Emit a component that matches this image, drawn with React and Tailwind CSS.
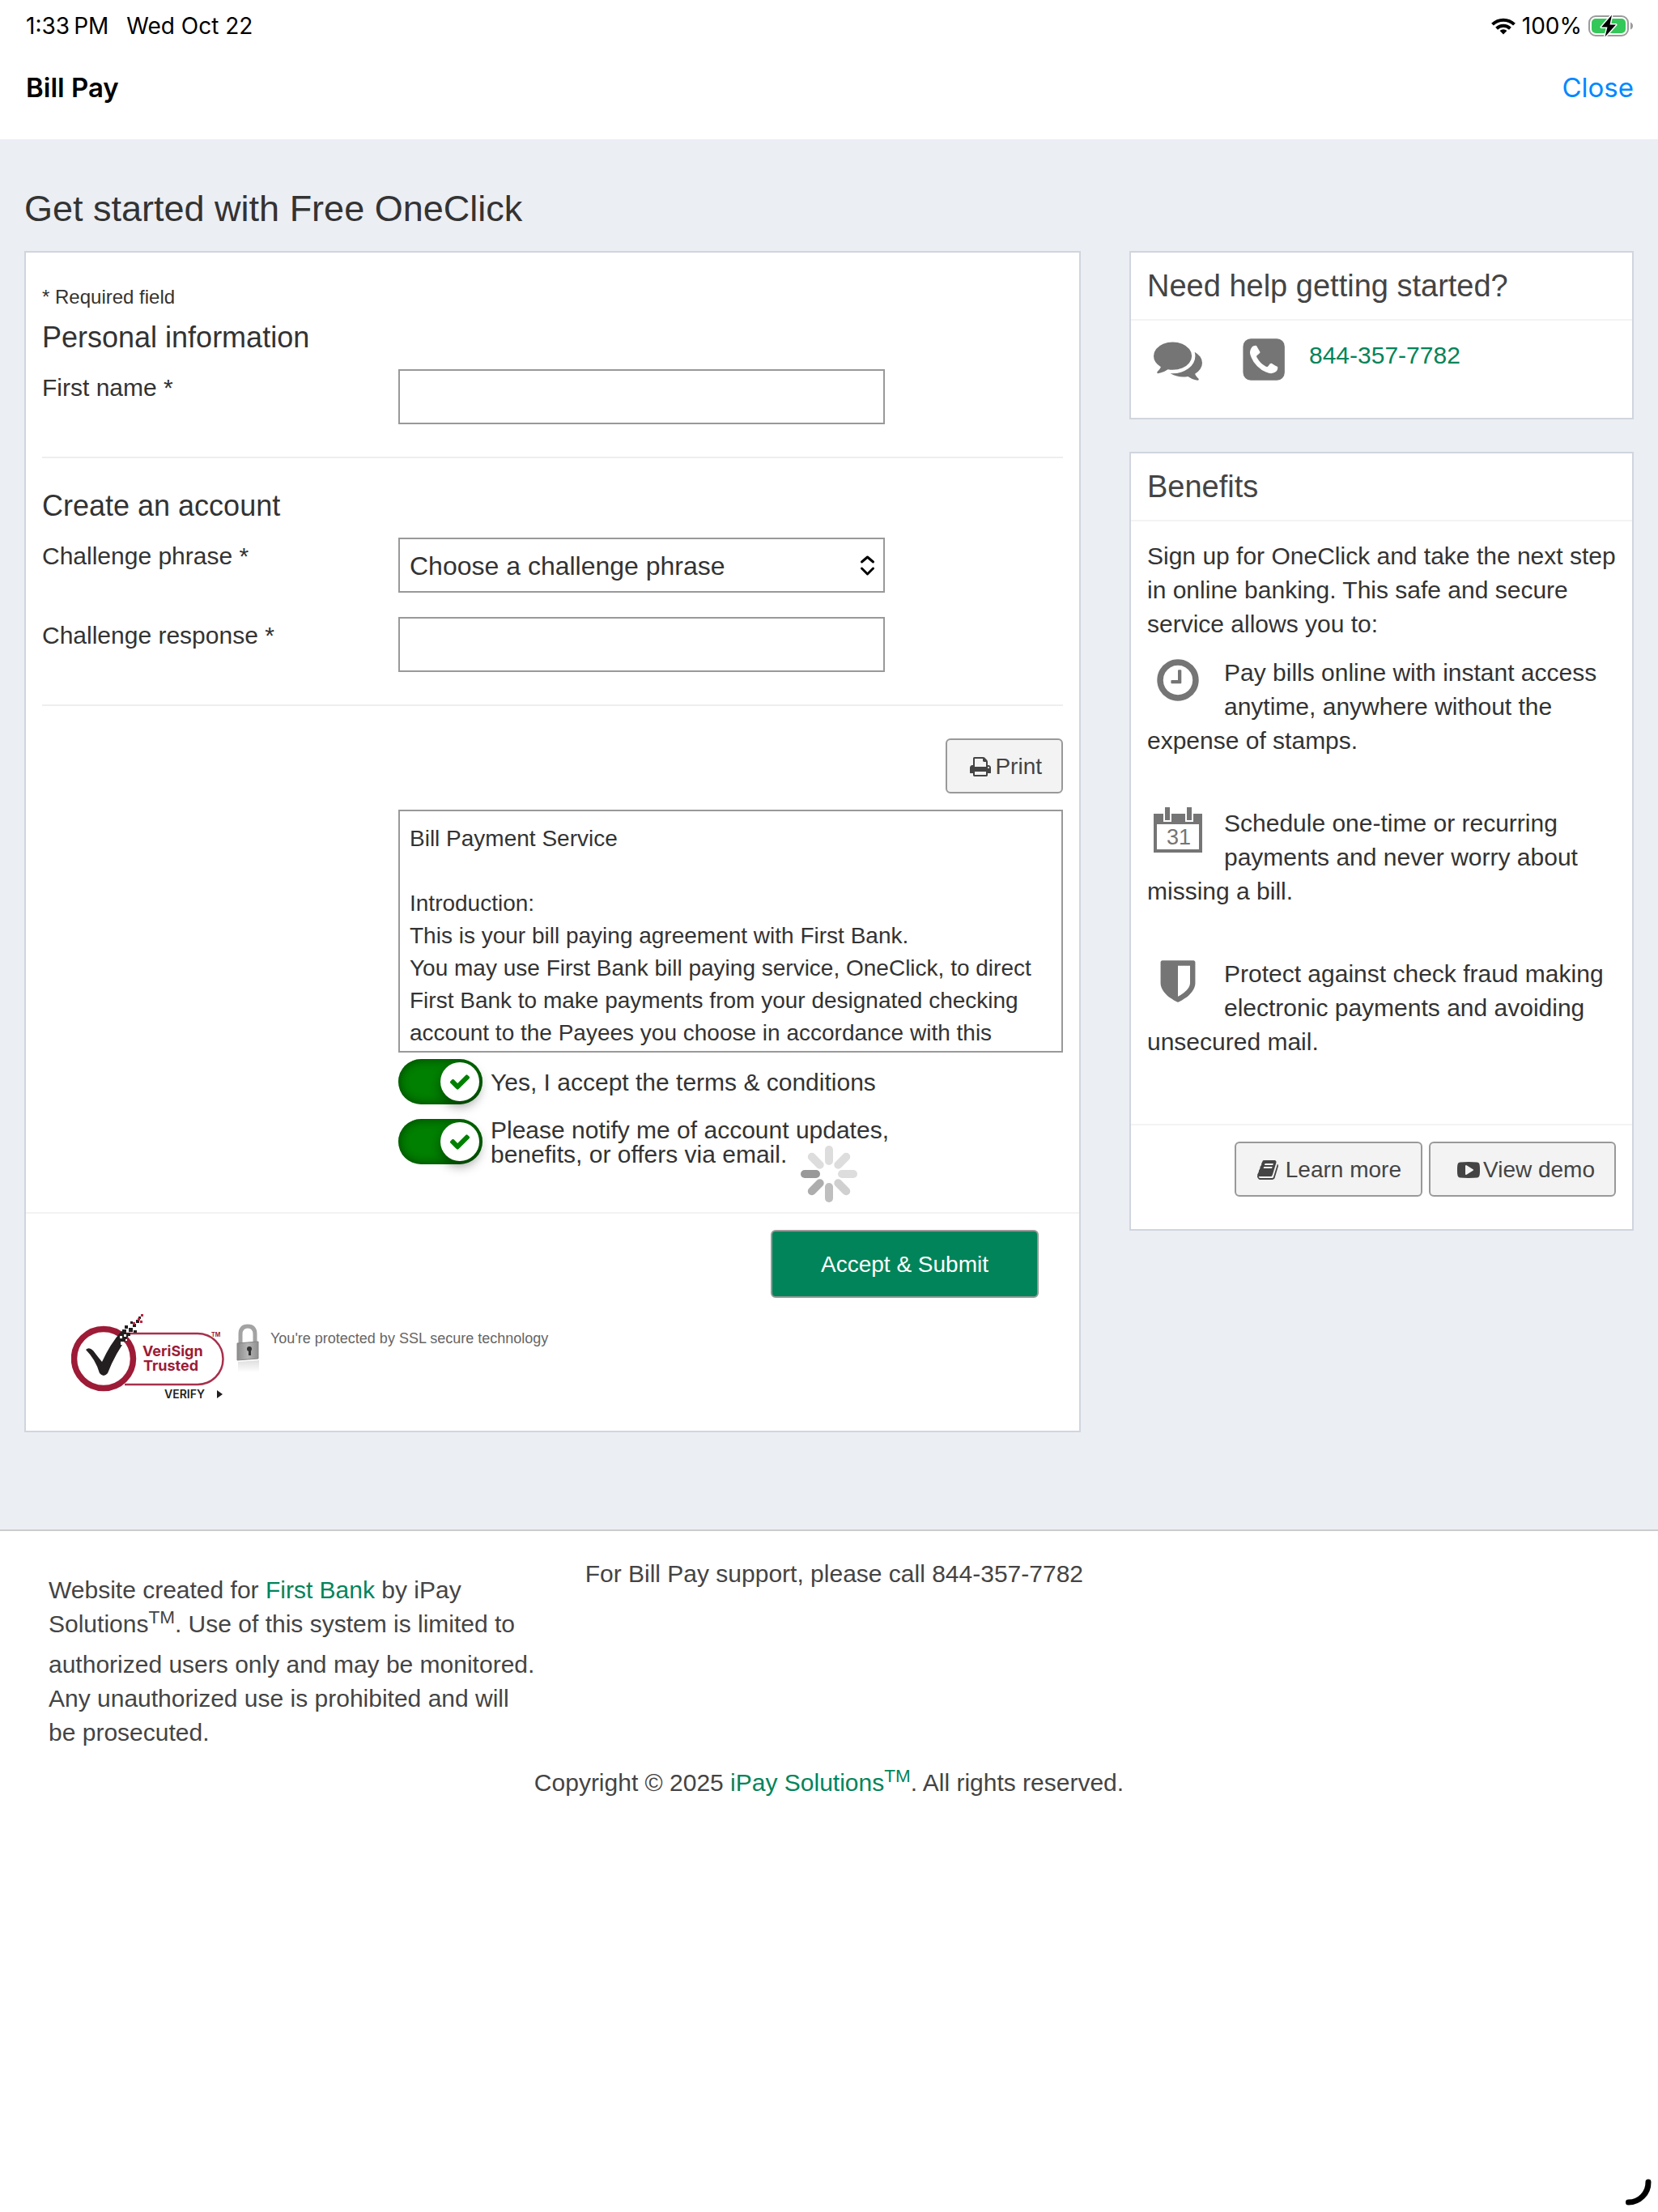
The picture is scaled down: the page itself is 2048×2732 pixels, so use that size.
import { useState } from "react";

const SANS = "font-['Liberation_Sans',Arial,sans-serif]";

const AGREEMENT = `Bill Payment Service

Introduction:
This is your bill paying agreement with First Bank.
You may use First Bank bill paying service, OneClick, to direct First Bank to make payments from your designated checking account to the Payees you choose in accordance with this`;

const ICONS = {
  comments:
    "M1408 768q0 139-94 257t-256.5 186.5-353.5 68.5q-86 0-176-16-124 88-278 128-36 9-86 16h-3q-11 0-20.5-8t-11.5-21q-1-3-1-6.5t.5-6.5 2-6l2.5-5t3.5-5.5 4-5 4.5-5 4-4.5q5-6 23-25t26-29.5 22.5-29 25-38.5 20.5-44q-124-72-195-177t-71-224q0-139 94-257t256.5-186.5 353.5-68.5 353.5 68.5 256.5 186.5 94 257zm384 256q0 120-71 224.5t-195 176.5q10 24 20.5 44t25 38.5 22.5 29 26 29.5 23 25q1 1 4 4.5t4.5 5 4 5 3.5 5.5l2.5 5t2 6 .5 6.5-1 6.5q-3 14-13 22t-22 7q-50-7-86-16-154-40-278-128-90 16-176 16-271 0-472-132 58 4 88 4 161 0 309-45t264-129q125-92 192-212t67-254q0-77-23-152 129 71 204 178t75 230z",
  phone:
    "M1472 1193q0-11-2-16t-18-16.5-40.5-25-47.5-26.5-45.5-25-28.5-15q-5-3-19-13t-25-15-21-5q-15 0-36.5 20.5t-39.5 45-38.5 45-33.5 20.5q-7 0-16.5-3.5t-15.5-6.5-17-9.5-14-8.5q-99-55-170-126.5t-127-170.5q-2-3-8.5-14t-9.5-17-6.5-15.5-3.5-16.5q0-13 20.5-33.5t45-38.5 45-39.5 20.5-36.5q0-10-5-21t-15-25-13-19q-3-6-15-28.5t-25-45.5-26.5-47.5-25-40.5-16.5-18-16-2q-48 0-101 22-46 21-80 94.5t-34 130.5q0 16 2.5 34t5 30.5 9 33 10 29.5 12.5 33 11 30q60 164 216.5 320.5t320.5 216.5q6 2 30 11t33 12.5 29.5 10 33 9 30.5 5 34 2.5q57 0 130.5-34t94.5-80q22-53 22-101zm256-777v960q0 119-84.5 203.5t-203.5 84.5h-960q-119 0-203.5-84.5t-84.5-203.5v-960q0-119 84.5-203.5t203.5-84.5h960q119 0 203.5 84.5t84.5 203.5z",
  clock:
    "M1024 544v448q0 14-9 23t-23 9h-320q-14 0-23-9t-9-23v-64q0-14 9-23t23-9h224v-352q0-14 9-23t23-9h64q14 0 23 9t9 23zm416 352q0-148-73-273t-198-198-273-73-273 73-198 198-73 273 73 273 198 198 273 73 273-73 198-198 73-273zm224 0q0 209-103 385.5t-279.5 279.5-385.5 103-385.5-103-279.5-279.5-103-385.5 103-385.5 279.5-279.5 385.5-103 385.5 103 279.5 279.5 103 385.5z",
  shield:
    "M1344 960v-640h-448v1137q119-63 213-137 235-184 235-360zm192-768v768q0 86-33.5 170.5t-83 150-118 127.5-126.5 103-121 77.5-89.5 49.5-42.5 20q-12 6-26 6t-26-6q-16-7-42.5-20t-89.5-49.5-121-77.5-126.5-103-118-127.5-83-150-33.5-170.5v-768q0-26 19-45t45-19h1152q26 0 45 19t19 45z",
  print:
    "M448 1536h896v-256h-896v256zm0-640h896v-384h-160q-40 0-68-28t-28-68v-160h-640v640zm1152 64q0-26-19-45t-45-19-45 19-19 45 19 45 45 19 45-19 19-45zm128 0v416q0 13-9.5 22.5t-22.5 9.5h-224v160q0 40-28 68t-68 28h-960q-40 0-68-28t-28-68v-160h-224q-13 0-22.5-9.5t-9.5-22.5v-416q0-79 56.5-135.5t135.5-56.5h64v-544q0-40 28-68t68-28h672q40 0 88 20t76 48l152 152q28 28 48 76t20 88v256h64q79 0 135.5 56.5t56.5 135.5z",
  book: "M1703 478q40 57 18 129l-275 906q-19 64-76.5 107.5t-122.5 43.5h-923q-77 0-148.5-53.5t-99.5-131.5q-24-67-2-127 0-4 3-27t4-37q1-8-3-21.5t-3-19.5q2-11 8-21t16.5-23.5 16.5-23.5q23-38 45-91.5t30-91.5q3-10 .5-30t-.5-28q3-11 17-28t17-23q21-36 42-92t25-90q1-9-2.5-32t.5-28q4-13 22-30.5t22-22.5q19-26 42.5-84.5t27.5-96.5q1-8-3-25.5t-2-26.5q2-8 9-18t18-23 17-21q8-12 16.5-30.5t15-35 16-36 19.5-32 26.5-23.5 36-11.5 47.5 5.5l-1 3q38-9 51-9h761q74 0 114 56t18 130l-274 906q-36 119-71.5 153.5t-128.5 34.5h-869q-27 0-38 15-11 16-1 43 24 70 144 70h923q29 0 56-15.5t35-41.5l300-987q7-22 5-57 38 15 59 43zm-1064 2q-4 13 2 22.5t20 9.5h608q13 0 25.5-9.5t16.5-22.5l21-64q4-13-2-22.5t-20-9.5h-608q-13 0-25.5 9.5t-16.5 22.5zm-83 256q-4 13 2 22.5t20 9.5h608q13 0 25.5-9.5t16.5-22.5l21-64q4-13-2-22.5t-20-9.5h-608q-13 0-25.5 9.5t-16.5 22.5z",
  play: "M1280 896q0-37-30-54l-512-320q-31-20-65-2-33 18-33 56v640q0 38 33 56 16 8 31 8 20 0 34-10l512-320q30-17 30-54zm512 0q0 96-1 150t-8.5 136.5-22.5 147.5q-16 73-69 123t-124 58q-222 25-671 25t-671-25q-71-8-124.5-58t-69.5-123q-14-65-21.5-147.5t-8.5-136.5-1-150 1-150 8.5-136.5 22.5-147.5q16-73 69-123t124-58q222-25 671-25t671 25q71 8 124.5 58t69.5 123q14 65 21.5 147.5t8.5 136.5 1 150z",
  check:
    "M1671 566q0 40-28 68l-724 724-136 136q-28 28-68 28t-68-28l-136-136-362-362q-28-28-28-68t28-68l136-136q28-28 68-28t68 28l294 295 656-657q28-28 68-28t68 28l136 136q28 28 28 68z",
};

const Icon = ({ name, className }) => (
  <svg viewBox="0 0 1792 1792" fill="currentColor" className={className} aria-hidden="true">
    <path d={ICONS[name]} />
  </svg>
);

const CalendarIcon = () => (
  <svg viewBox="0 0 60 60" className="size-[60px]" fill="#757575" aria-hidden="true">
    <path fillRule="evenodd" d="M0 9H12V19H22V9H39V19H49V9H60V57H0ZM4 22V53H56V22Z" />
    <path d="M14 1H20V17H14ZM41 1H47V17H41Z" />
    <text x="31" y="47" textAnchor="middle" fontSize="27" fontFamily="Liberation Sans">
      31
    </text>
  </svg>
);

const WifiIcon = () => (
  <svg viewBox="0 0 30 21" className="h-[21px] w-[30px]" aria-hidden="true">
    <g fill="none" stroke="#000" strokeWidth="4">
      <path d="M1.5 8.2A19.2 19.2 0 0 1 28.5 8.2" />
      <path d="M6.6 13.3A12 12 0 0 1 23.4 13.3" />
    </g>
    <path d="M15 20.5L10.6 16.1A6.3 6.3 0 0 1 19.4 16.1Z" />
  </svg>
);

const BatteryIcon = () => (
  <svg viewBox="0 0 56 28" className="h-7 w-14" aria-hidden="true">
    <rect x="1" y="2" width="48" height="24" rx="8" fill="none" stroke="#9b9b9b" strokeWidth="2" />
    <rect x="4" y="5" width="42" height="18" rx="5" fill="#34c759" />
    <path d="M52 9.5Q55 11 55 14T52 18.5Z" fill="#9b9b9b" />
    <path
      d="M29 0.5L16 15.5H23.5L20.5 27.5L34 12.5H26.5Z"
      fill="#000"
      stroke="#fff"
      strokeWidth="3"
      paintOrder="stroke"
      strokeLinejoin="round"
    />
  </svg>
);

const SPOKES = ["#dddddd", "#dddddd", "#dddddd", "#d0d0d0", "#bfbfbf", "#adadad", "#999999", "#dddddd"];

const Spinner = () => (
  <svg viewBox="0 0 72 72" className="size-[72px]" role="status" aria-label="Loading">
    {SPOKES.map((color, i) => (
      <rect
        key={i}
        x="31"
        y="1"
        width="10"
        height="24"
        rx="5"
        fill={color}
        transform={`rotate(${i * 45} 36 36)`}
      />
    ))}
  </svg>
);

const VeriSignLogo = () => (
  <svg viewBox="0 0 192 110" className="h-[110px] w-48" role="img" aria-label="VeriSign Trusted">
    <path d="M66 24H156A31.500 31.500 0 0 1 156 87H66" fill="none" stroke="#a8304c" strokeWidth="2.500" />
    <circle cx="40" cy="55" r="36.500" fill="#fff" stroke="#9d1b36" strokeWidth="7.500" />
    <path
      d="M18 44Q22 40 27 45Q33 53 38 59Q48 37 62 21L72 25Q54 49 45 73Q40 79 35 73Q30 56 18 44Z"
      fill="#231f20"
    />
    <path
      d="M63 19h5v5h-5zM69 23h4v4h-4zM71 17h5v5h-5zM66 14h4v4h-4zM76 12h4v4h-4zM77 20h4v3h-4zM80 7h4v4h-4zM83 3h3v3h-3zM73 9h3v3h-3z"
      fill="#231f20"
    />
    <path d="M76 10h3v3h-3zM85 8h3v3h-3zM82 5h3v3h-3zM86 0h3v3h-3z" fill="#c4203f" />
    <path d="M60 27h3v3h-3zM65 25h3v3h-3zM61 34h4v4h-4zM67 31h2v2h-2z" fill="#fff" />
    <g fontFamily="Inter" fontWeight="bold">
      <text x="88" y="52" fontSize="18" fill="#9d1b36">VeriSign</text>
      <text x="89" y="70" fontSize="18" fill="#9d1b36">Trusted</text>
      <text x="173" y="28" fontSize="7" fill="#9d1b36">TM</text>
      <text x="115" y="104" fontSize="14" fontWeight="600" fill="#231f20">VERIFY</text>
    </g>
    <path d="M180 94L187 99L180 104Z" fill="#231f20" />
  </svg>
);

const LockIcon = () => (
  <svg viewBox="0 0 30 64" className="h-16 w-[30px]" aria-hidden="true">
    <defs>
      <linearGradient id="lock-body" x1="0" x2="1">
        <stop offset="0" stopColor="#8c8c8c" />
        <stop offset="0.500" stopColor="#b5b5b5" />
        <stop offset="1" stopColor="#909090" />
      </linearGradient>
      <linearGradient id="lock-fade" x1="0" x2="0" y1="0" y2="1">
        <stop offset="0" stopColor="#c8c8c8" />
        <stop offset="1" stopColor="#ffffff" />
      </linearGradient>
    </defs>
    <path d="M5 24V13Q5 3 14 3T23 13V24" fill="none" stroke="#a3a3a3" strokeWidth="5" />
    <path d="M1 24L27 22V43L1 45Z" fill="url(#lock-body)" stroke="#868686" />
    <circle cx="16" cy="31" r="3" fill="#333" />
    <path d="M15 31h3v8h-3z" fill="#333" />
    <path d="M2 47L28 45V60H2Z" fill="url(#lock-fade)" opacity="0.600" />
  </svg>
);

const Field = ({ id, label, children }) => (
  <div className="grid grid-cols-[440px_minmax(0,1fr)]">
    <label htmlFor={id} className="pt-0.5">
      {label} *
    </label>
    {children}
  </div>
);

const TextField = ({ id, label }) => (
  <Field id={id} label={label}>
    <input id={id} type="text" className="h-[68px] w-[601px] border-2 border-[#999] bg-white px-3 text-[32px]" />
  </Field>
);

const Toggle = ({ id, children }) => {
  const [on, setOn] = useState(true);
  return (
    <div className="flex items-center gap-2.5 leading-[30px]">
      <span className="relative flex shrink-0">
        <input
          id={id}
          type="checkbox"
          checked={on}
          onChange={() => setOn(!on)}
          className="h-14 w-[104px] appearance-none rounded-full bg-[#ccc] shadow-[inset_0_0_14px_rgba(0,0,0,0.5)] checked:bg-[#008000]"
        />
        <span className="pointer-events-none absolute top-1 right-1 flex size-12 items-center justify-center rounded-full bg-white text-[#008000] shadow-[0_6px_14px_rgba(0,0,0,0.4)]">
          <Icon name="check" className="size-7" />
        </span>
      </span>
      <label htmlFor={id} className="pt-0.5">
        {children}
      </label>
    </div>
  );
};

const SmallButton = ({ icon, className, children }) => (
  <button
    type="button"
    className={`flex h-[68px] items-center rounded-md border-2 border-[#999] bg-[#f3f3f3] pt-0.5 pr-6 text-[28px] text-[#444] ${className}`}
  >
    <Icon name={icon} className="size-7" />
    {children}
  </button>
);

const Card = ({ title, children }) => (
  <section className="border-2 border-[#d0d5de] bg-white">
    <h2 className="border-b-2 border-[#f3f3f3] px-5 pt-3.5 pb-3.5 text-[38px] leading-[54px] text-[#444]">{title}</h2>
    {children}
  </section>
);

const Benefit = ({ icon, children }) => (
  <li className="flow-root">
    <span className="float-left h-[60px] w-[95px] pl-2 text-[#757575]">{icon}</span>
    {children}
  </li>
);

const SignUpForm = () => (
  <form className="border-2 border-[#d0d5de] bg-white" onSubmit={(e) => e.preventDefault()}>
    <div className="px-5 pt-[38px] pb-14">
      <p className="text-2xl leading-[34px]">* Required field</p>
      <h2 className="mt-2 mb-3.5 text-4xl leading-[50px]">Personal information</h2>
      <TextField id="first-name" label="First name" />

      <hr className="mt-10 mb-[34px] border-t-2 border-[#eee]" />

      <h2 className="mb-3.5 text-4xl leading-[50px]">Create an account</h2>
      <div className="space-y-[30px]">
        <Field id="phrase" label="Challenge phrase">
          <div className="relative w-[601px]">
            <select
              id="phrase"
              className="h-[68px] w-full appearance-none border-2 border-[#999] bg-white px-3 pt-0.5 text-[32px] text-[#333]"
            >
              <option>Choose a challenge phrase</option>
            </select>
            <svg
              viewBox="0 0 20 28"
              className="pointer-events-none absolute top-5 right-3 h-7 w-5"
              fill="none"
              stroke="#000"
              strokeWidth="3"
              strokeLinecap="round"
              strokeLinejoin="round"
              aria-hidden="true"
            >
              <path d="M3.500 10L10.500 4L17.500 10M3.500 18L10.500 25L17.500 18" />
            </svg>
          </div>
        </Field>
        <TextField id="response" label="Challenge response" />
      </div>

      <hr className="mt-10 mb-10 border-t-2 border-[#eee]" />

      <div className="flex justify-end">
        <SmallButton icon="print" className="gap-1 pl-[27px]">
          Print
        </SmallButton>
      </div>

      <div className="mt-5 ml-[440px]">
        <textarea
          readOnly
          aria-label="Terms and conditions"
          defaultValue={AGREEMENT}
          className="block h-[300px] w-full resize-none overflow-hidden border-2 border-[#999] bg-white px-3 pt-3.5 text-[28px] leading-10"
        />
        <div className="mt-2 space-y-[15px]">
          <Toggle id="terms">Yes, I accept the terms &amp; conditions</Toggle>
          <Toggle id="notify">
            Please notify me of account updates,
            <br />
            benefits, or offers via email.
          </Toggle>
        </div>
      </div>
    </div>

    <div className="border-t-2 border-[#f3f3f3] pt-5 pb-[34px]">
      <div className="flex justify-end pr-[50px]">
        <button
          type="submit"
          className="h-[84px] rounded-md border-2 border-[#999] bg-[#02845a] px-[60px] pt-0.5 text-[28px] text-white"
        >
          Accept &amp; Submit
        </button>
      </div>
      <div className="mt-5 flex gap-3 pl-14">
        <VeriSignLogo />
        <div className="flex gap-3 pt-3">
          <LockIcon />
          <p className="pt-1.5 text-lg leading-6 text-[#666]">You're protected by SSL secure technology</p>
        </div>
      </div>
    </div>
  </form>
);

const App = () => {
  return (
    <div className={`min-h-screen bg-white text-[30px] leading-[42px] text-[#333] ${SANS}`}>
      <header className="pt-3 pr-[30px] pb-10 pl-8 font-['Inter',sans-serif] text-black">
        <div className="flex h-10 items-center justify-between text-[28px]">
          <div className="flex gap-[22px]">
            <span>1:33&thinsp;PM</span>
            <span>Wed Oct 22</span>
          </div>
          <div className="flex items-center gap-2">
            <WifiIcon />
            <span>100%</span>
            <BatteryIcon />
          </div>
        </div>
        <div className="mt-8 flex items-center justify-between text-[33px] leading-[48px]">
          <h1 className="font-semibold">Bill Pay</h1>
          <button type="button" className="text-[#0088ff]">
            Close
          </button>
        </div>
      </header>

      <main className="bg-[#ebeef3] px-[30px] pt-[54px] pb-[120px]">
        <h1 className="mb-5 text-[45px] leading-[64px]">Get started with Free OneClick</h1>
        <div className="grid grid-cols-[minmax(0,1305fr)_minmax(0,623fr)] items-start gap-[60px]">
          <SignUpForm />

          <aside className="space-y-10">
            <Card title="Need help getting started?">
              <div className="flex items-start pt-[18px] pr-5 pb-[42px] pl-7 text-[#757575]">
                <Icon name="comments" className="size-[60px]" />
                <Icon name="phone" className="ml-[44px] size-[60px]" />
                <a href="tel:8443577782" className="ml-7 pt-1 text-[#02845a]">
                  844-357-7782
                </a>
              </div>
            </Card>

            <Card title="Benefits">
              <div className="border-b-2 border-[#f3f3f3] pt-[22px] pr-3 pb-20 pl-5">
                <p>
                  Sign up for OneClick and take the next step in online banking. This safe and secure service allows
                  you to:
                </p>
                <ul className="mt-[18px] space-y-[60px]">
                  <Benefit icon={<Icon name="clock" className="size-[60px]" />}>
                    Pay bills online with instant access anytime, anywhere without the expense of stamps.
                  </Benefit>
                  <Benefit icon={<CalendarIcon />}>
                    Schedule one-time or recurring payments and never worry about missing a bill.
                  </Benefit>
                  <Benefit icon={<Icon name="shield" className="size-[60px]" />}>
                    Protect against check fraud making electronic payments and avoiding unsecured mail.
                  </Benefit>
                </ul>
              </div>
              <div className="flex justify-end gap-2 px-5 pt-5 pb-10">
                <SmallButton icon="book" className="gap-2 pl-[25px]">
                  Learn more
                </SmallButton>
                <SmallButton icon="play" className="gap-1 pl-[33px]">
                  View demo
                </SmallButton>
              </div>
            </Card>
          </aside>
        </div>
      </main>

      <footer className="border-t-2 border-[#ccc] text-[#444]">
        <div className="grid grid-cols-[1fr_2fr] px-[60px]">
          <div className="space-y-2 pt-[52px] pr-9">
            <p>
              Website created for{" "}
              <a href="#" className="text-[#02845a]">
                First Bank
              </a>{" "}
              by iPay Solutions<sup>TM</sup>. Use of this system is limited to
            </p>
            <p>authorized users only and may be monitored. Any unauthorized use is prohibited and will be prosecuted.</p>
          </div>
          <p className="pt-8 pl-5">For Bill Pay support, please call 844-357-7782</p>
        </div>
        <p className="mt-5 text-center">
          Copyright © 2025{" "}
          <a href="#" className="text-[#02845a]">
            iPay Solutions<sup>TM</sup>
          </a>
          . All rights reserved.
        </p>
      </footer>

      {/* loading indicator floats over the form */}
      <div className="absolute top-[1414px] left-1/2 -translate-x-1/2">
        <Spinner />
      </div>

      <svg viewBox="0 0 48 48" className="fixed right-0 bottom-0 size-12" fill="none" aria-hidden="true">
        <path d="M36 11A24.500 24.500 0 0 1 11.500 36" stroke="#000" strokeWidth="7" strokeLinecap="round" />
      </svg>
    </div>
  );
};

export default App;
